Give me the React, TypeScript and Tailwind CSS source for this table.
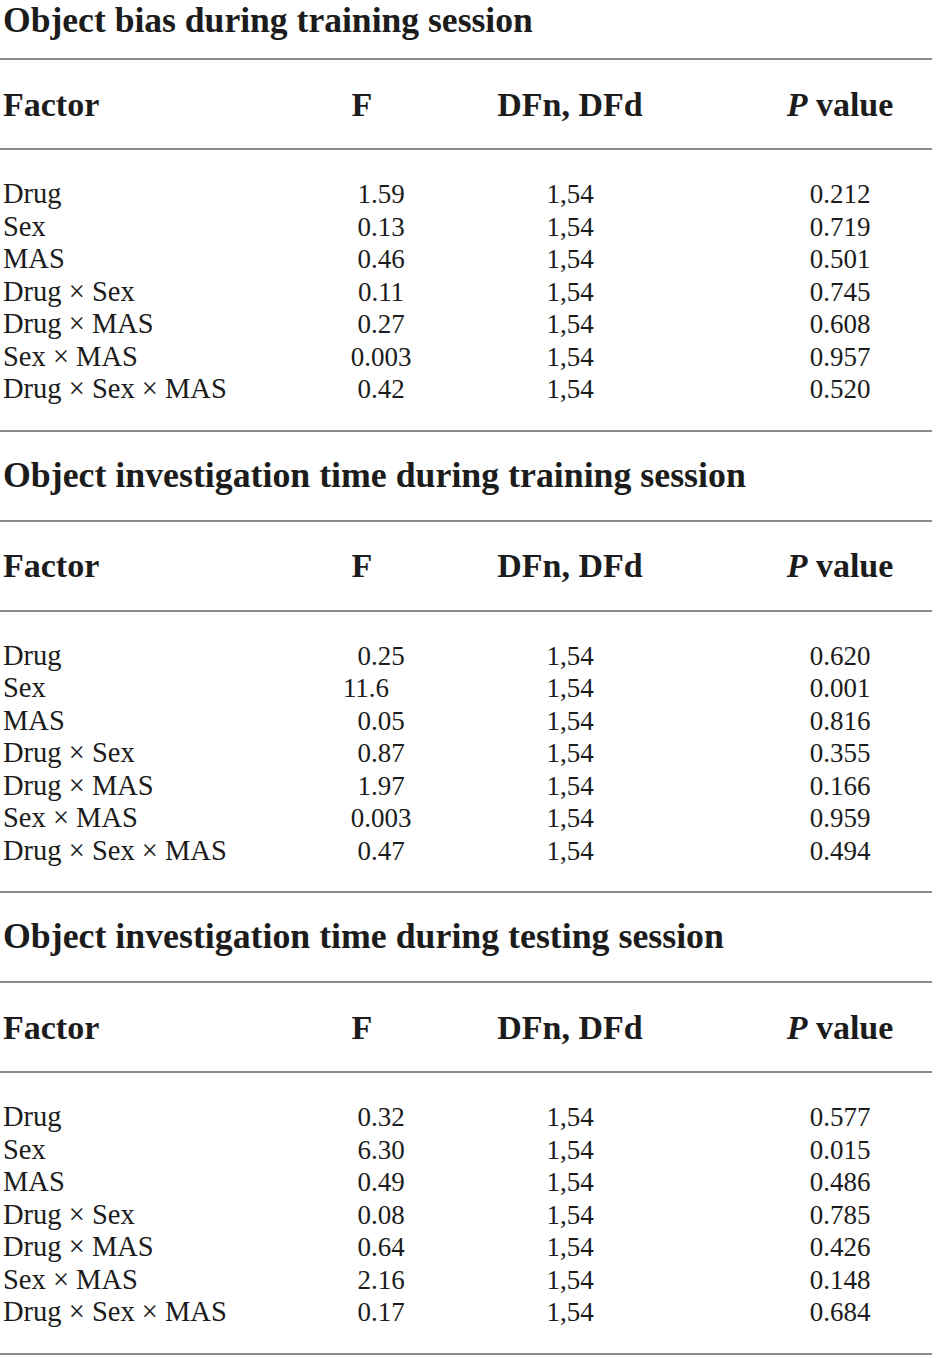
import React from 'react';

type Row = [string, string, string, string];

const factors = ['Drug', 'Sex', 'MAS', 'Drug × Sex', 'Drug × MAS', 'Sex × MAS', 'Drug × Sex × MAS'];

const sections: { title: string; rows: Row[] }[] = [
  {
    title: 'Object bias during training session',
    rows: [
      ['', '1.59', '1,54', '0.212'],
      ['', '0.13', '1,54', '0.719'],
      ['', '0.46', '1,54', '0.501'],
      ['', '0.11', '1,54', '0.745'],
      ['', '0.27', '1,54', '0.608'],
      ['', '0.003', '1,54', '0.957'],
      ['', '0.42', '1,54', '0.520'],
    ],
  },
  {
    title: 'Object investigation time during training session',
    rows: [
      ['', '0.25', '1,54', '0.620'],
      ['', '11.6', '1,54', '0.001'],
      ['', '0.05', '1,54', '0.816'],
      ['', '0.87', '1,54', '0.355'],
      ['', '1.97', '1,54', '0.166'],
      ['', '0.003', '1,54', '0.959'],
      ['', '0.47', '1,54', '0.494'],
    ],
  },
  {
    title: 'Object investigation time during testing session',
    rows: [
      ['', '0.32', '1,54', '0.577'],
      ['', '6.30', '1,54', '0.015'],
      ['', '0.49', '1,54', '0.486'],
      ['', '0.08', '1,54', '0.785'],
      ['', '0.64', '1,54', '0.426'],
      ['', '2.16', '1,54', '0.148'],
      ['', '0.17', '1,54', '0.684'],
    ],
  },
];

function Rule() {
  return <div className="h-[2px] w-[932px] bg-[#8c8c8c]" />;
}

function Section({ title, rows, first }: { title: string; rows: Row[]; first: boolean }) {
  return (
    <div>
      {/* title */}
      <div
        className={
          first
            ? 'h-[58px] pl-[3px] text-[35.6px] font-bold leading-[40px]'
            : 'flex h-[88px] items-center pl-[3px] text-[35.8px] font-bold'
        }
      >
        {title}
      </div>
      <Rule />

      {/* column heads */}
      <div className="flex h-[88px] items-center text-[34px] font-bold">
        <div className="w-[300px] pl-[3px]">Factor</div>
        <div className="w-[162px] pr-[38px] text-center">F</div>
        <div className="w-[216px] text-center">DFn, DFd</div>
        <div className="ml-[72px] w-[180px] text-center">
          <span className="italic">P</span> value
        </div>
      </div>
      <Rule />

      {/* values */}
      <div className="pt-[28px] pb-[24px] text-[27px]">
        {rows.map((r, i) => (
          <div key={i} className="flex h-[32.5px] items-center leading-[32.5px]">
            <div className="w-[300px] pl-[3px] text-[28.5px]">{factors[i]}</div>
            <div className={r[1] === '11.6' ? 'w-[162px] pr-[30px] text-center' : 'w-[162px] text-center'}>{r[1]}</div>
            <div className="w-[216px] text-center">{r[2]}</div>
            <div className="ml-[72px] w-[180px] text-center">{r[3]}</div>
          </div>
        ))}
      </div>
      <Rule />
    </div>
  );
}

export default function App() {
  return (
    <div className="min-h-[1358px] w-[950px] bg-white text-[#1c1c1c]" style={{ fontFamily: '"Liberation Serif", "Times New Roman", serif' }}>
      {sections.map((s, i) => (
        <Section key={i} title={s.title} rows={s.rows} first={i === 0} />
      ))}
    </div>
  );
}
